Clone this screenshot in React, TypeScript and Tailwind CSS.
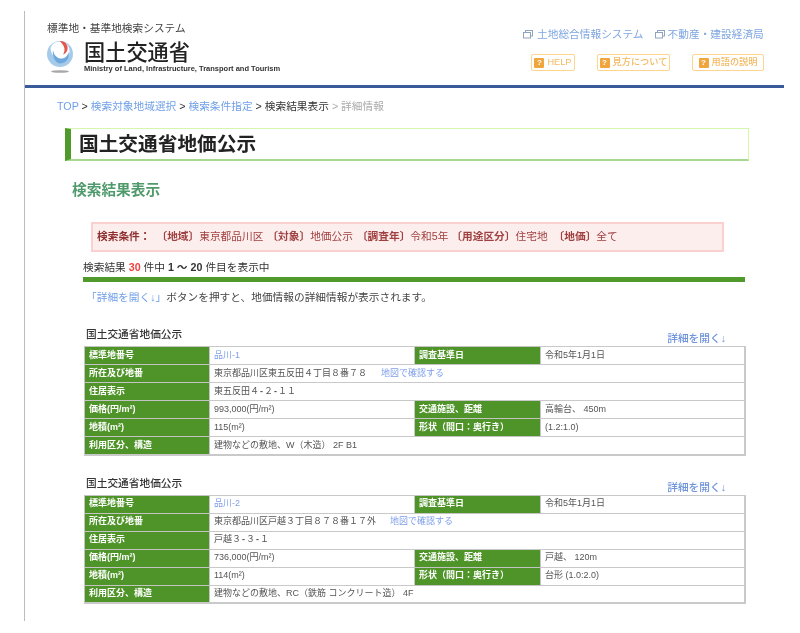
const FONT = "font-['Liberation_Sans','Noto_Sans_CJK_JP',sans-serif]";

function Logo() {
  return (
    <svg width="27" height="34" viewBox="0 0 27 34" className="shrink-0">
      <circle cx="13" cy="14" r="13" fill="#a6cbea" />
      <path d="M3.5 9 C3.5 5 8 1.5 13 1.5 C18 1.5 22.5 5 22.5 11 C22.5 17 18 20.5 13 20.5 C8.5 20.5 4.5 15 3.5 9 Z" fill="#ffffff" />
      <path d="M6 10 C7 16 11 19 15 18.5 C19 18 21 15 21.5 12 C23 17 20 23 13.5 23.5 C8 23.5 5 16 6 10 Z" fill="#6ea8dc" />
      <path d="M12.5 1 C18 0.5 21.5 5 20.5 9.5 C20 12 18.5 13.5 16 14.5 C17.5 12 18 9.5 17 7 C16 4.5 14.5 2.5 12.5 1 Z" fill="#e2584e" />
      <ellipse cx="13" cy="31.5" rx="9" ry="1.3" fill="#a8a8a8" />
    </svg>
  );
}

function LinkIcon() {
  return (
    <svg width="10" height="9" viewBox="0 0 10 9" className="shrink-0">
      <rect x="2.5" y="0.5" width="7" height="5.5" fill="#fff" stroke="#8fa5bd" />
      <rect x="0.5" y="2.5" width="7" height="5.5" fill="#fff" stroke="#8fa5bd" />
    </svg>
  );
}

function HelpButton({ label, className }: { label: string; className: string }) {
  return (
    <a className={`flex h-[17px] items-center justify-center gap-[3px] rounded-[2px] border border-[#fdd58c] text-[9.2px] font-medium leading-none text-[#f3b860] ${className}`}>
      <span className="flex h-[10px] w-[10px] items-center justify-center rounded-[1px] bg-[#f0a63c] text-[8px] font-bold text-white">?</span>
      {label}
    </a>
  );
}

interface Land {
  no: string;
  address: string;
  display: string[];
  price: string;
  station: string;
  area: string;
  shape: string;
  use: string;
}

const lands: Land[] = [
  {
    no: '品川-1',
    address: '東京都品川区東五反田４丁目８番７８',
    display: ['東五反田４', '２', '１１'],
    price: '993,000(円/m²)',
    station: '高輪台、 450m',
    area: '115(m²)',
    shape: '(1.2:1.0)',
    use: '建物などの敷地、W（木造） 2F B1',
  },
  {
    no: '品川-2',
    address: '東京都品川区戸越３丁目８７８番１７外',
    display: ['戸越３', '３', '１'],
    price: '736,000(円/m²)',
    station: '戸越、 120m',
    area: '114(m²)',
    shape: '台形 (1.0:2.0)',
    use: '建物などの敷地、RC（鉄筋 コンクリート造） 4F',
  },
];

function Th({ children }: { children: React.ReactNode }) {
  return <th className="h-[18px] border border-[#c4c4c4] bg-[#4f9428] pl-[4px] text-left text-[9px] font-bold text-white">{children}</th>;
}

function Td({ children, span }: { children: React.ReactNode; span?: number }) {
  return <td colSpan={span} className="h-[18px] border border-[#c9c9c9] pl-[4px] text-left text-[9px] text-[#555]">{children}</td>;
}

function LandTable({ land }: { land: Land }) {
  return (
    <section className="ml-[59px] w-[660px]">
      <div className="flex items-end justify-between">
        <h3 className="ml-[2px] text-[10.7px] font-medium leading-[14px] text-[#333]">国土交通省地価公示</h3>
        <a className="mr-[18px] translate-y-[4px] text-[10.7px] font-medium leading-[14px] text-[#6f94dc]">詳細を開く↓</a>
      </div>
      <table className="mt-[5px] w-[660px] table-fixed border-collapse border-r-2 border-b-2 border-[#c9c9c9]">
        <colgroup>
          <col className="w-[125px]" />
          <col className="w-[205px]" />
          <col className="w-[126px]" />
          <col className="w-[204px]" />
        </colgroup>
        <tbody>
          <tr>
            <Th>標準地番号</Th>
            <Td><a className="text-[#7f9fea]">{land.no}</a></Td>
            <Th>調査基準日</Th>
            <Td>令和5年1月1日</Td>
          </tr>
          <tr>
            <Th>所在及び地番</Th>
            <Td span={3}>
              {land.address}
              <a className="ml-[14px] text-[#7f9fea]">地図で確認する</a>
            </Td>
          </tr>
          <tr>
            <Th>住居表示</Th>
            <Td span={3}>
              {land.display.map((part, i) => (
                <span key={i}>
                  {i > 0 && <b className="mx-[1px]">-</b>}
                  {part}
                </span>
              ))}
            </Td>
          </tr>
          <tr>
            <Th>価格(円/m²)</Th>
            <Td>{land.price}</Td>
            <Th>交通施設、距離</Th>
            <Td>{land.station}</Td>
          </tr>
          <tr>
            <Th>地積(m²)</Th>
            <Td>{land.area}</Td>
            <Th>形状（間口：奥行き）</Th>
            <Td>{land.shape}</Td>
          </tr>
          <tr>
            <Th>利用区分、構造</Th>
            <Td span={3}>{land.use}</Td>
          </tr>
        </tbody>
      </table>
    </section>
  );
}

export default function App() {
  return (
    <div className={`h-[633px] w-[800px] overflow-hidden bg-white pt-[11px] pl-[24px] ${FONT} blur-[0.5px]`}>
      <div className="h-[610px] w-[760px] border-l border-[#bdbdbd]">
        {/* Header */}
        <header className="box-content flex h-[74px] justify-between border-b-[3px] border-[#3a5a9c]">
          <div className="pl-[22px] pt-[10px]">
            <p className="text-[10.7px] leading-[14px] text-[#444]">標準地・基準地検索システム</p>
            <div className="mt-[5px] flex gap-[10px]">
              <Logo />
              <div className="pt-[1px]">
                <p className="text-[21.2px] font-medium leading-[23px] text-[#222]">国土交通省</p>
                <p className="whitespace-nowrap text-[7.5px] font-bold leading-[9px] text-[#333]">Ministry of Land, Infrastructure, Transport and Tourism</p>
              </div>
            </div>
          </div>
          <div className="w-[261px] pt-[16px] pr-[20px]">
            <div className="flex items-center text-[10.7px] leading-[14px] text-[#7fa6e0]">
              <LinkIcon />
              <span className="ml-[4px]">土地総合情報システム</span>
              <span className="ml-[11px]"><LinkIcon /></span>
              <span className="ml-[3px] whitespace-nowrap">不動産・建設経済局</span>
            </div>
            <div className="mt-[13px] flex justify-between pl-[8px]">
              <HelpButton label="HELP" className="w-[44px]" />
              <HelpButton label="見方について" className="w-[73px]" />
              <HelpButton label="用語の説明" className="w-[72px]" />
            </div>
          </div>
        </header>

        {/* Breadcrumb */}
        <nav className="mt-[11px] ml-[32px] text-[10.7px] leading-[14px] text-[#333]">
          <a className="text-[#6f9fe8]">TOP</a> &gt; <a className="text-[#6f9fe8]">検索対象地域選択</a> &gt; <a className="text-[#6f9fe8]">検索条件指定</a> &gt; 検索結果表示 <span className="text-[#aaa]">&gt; 詳細情報</span>
        </nav>

        {/* Title */}
        <h1 className="mt-[15px] ml-[40px] flex h-[33px] w-[684px] items-center border border-b-2 border-l-[6px] border-[#d4f7b0] border-b-[#a8d890] border-l-[#4f9a2a] pl-[8px] text-[19.7px] font-bold text-[#222]">
          <span className="translate-y-[1px]">国土交通省地価公示</span>
        </h1>
        <h2 className="mt-[20px] ml-[47px] text-[14.7px] font-bold leading-[18px] text-[#4f9a6c]">検索結果表示</h2>

        {/* Condition */}
        <div className="mt-[23px] ml-[66px] flex h-[30px] w-[633px] items-center border-2 border-[#fbd0d0] bg-[#fdeeee] pb-[1px] pl-[4px] text-[10.7px] text-[#a04040]">
          <b className="mr-[6px] text-[#8f2f2f]">検索条件：</b>
          <b>〔地域〕</b>東京都品川区 <b className="ml-[4px]">〔対象〕</b>地価公示 <b className="ml-[4px]">〔調査年〕</b>令和5年 <b className="ml-[3px]">〔用途区分〕</b>住宅地 <b className="ml-[6px]">〔地価〕</b>全て
        </div>

        {/* Count */}
        <p className="mt-[8px] ml-[58px] text-[10.7px] leading-[14px] text-[#333]">
          検索結果 <b className="text-[#f04040]">30</b> 件中 <b>1 ～ 20</b> 件目を表示中
        </p>
        <div className="mt-[3px] ml-[58px] h-[5px] w-[662px] bg-[#4f9a2a]" />
        <p className="mt-[8px] ml-[61px] text-[10.7px] leading-[14px] text-[#444]">
          <span className="text-[#6f9fe8]">「詳細を開く↓」</span>ボタンを押すと、地価情報の詳細情報が表示されます。
        </p>

        <div className="mt-[23px] flex flex-col gap-[20px]">
          {lands.map((land) => (
            <LandTable key={land.no} land={land} />
          ))}
        </div>
      </div>
    </div>
  );
}
